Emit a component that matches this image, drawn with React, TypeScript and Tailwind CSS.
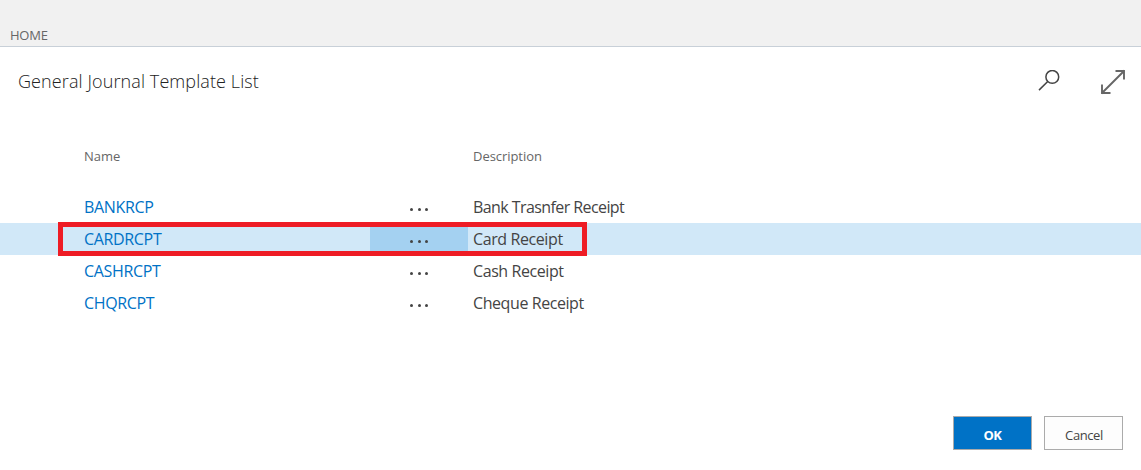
type Row = { name: string; desc: string; descClass: string; selected?: boolean };

const rows: Row[] = [
  { name: "BANKRCP", desc: "Bank Trasnfer Receipt", descClass: "tracking-[-0.58px]" },
  { name: "CARDRCPT", desc: "Card Receipt", descClass: "tracking-[-0.4px]", selected: true },
  { name: "CASHRCPT", desc: "Cash Receipt", descClass: "tracking-[-0.42px]" },
  { name: "CHQRCPT", desc: "Cheque Receipt", descClass: "tracking-[-0.42px]" },
];

function SearchIcon() {
  return (
    <svg width="24" height="24" viewBox="0 0 24 24" fill="none" stroke="#444" strokeWidth="1.5">
      <circle cx="14.3" cy="6.9" r="6.4" />
      <path d="M9.7 11.5 1 20.1" />
    </svg>
  );
}

function ExpandIcon() {
  return (
    <svg width="26" height="26" viewBox="0 0 26 26" fill="none" stroke="#666" strokeWidth="1.9">
      <path d="M1.5 24.5 24.5 1.5M15.5 2H24v8.5M2 15.5V24h8.5" />
    </svg>
  );
}

function Dots() {
  return (
    <span className="flex gap-[4.5px] pt-1">
      <i className="size-[3px] rounded-full bg-[#444]" />
      <i className="size-[3px] rounded-full bg-[#444]" />
      <i className="size-[3px] rounded-full bg-[#444]" />
    </span>
  );
}

export default function App() {
  return (
    <div className="flex h-[470px] w-[1141px] flex-col overflow-hidden bg-white font-['Open_Sans',sans-serif] text-[#444]">
      <header className="flex h-[47px] items-end border-b border-[#c8d0d8] bg-[#f1f1f1] pb-px pl-[10px] text-[13px] leading-5 tracking-[-0.25px] text-[#666]">
        <span>HOME</span>
      </header>
      <div className="flex h-[70px] items-center justify-between pl-[18px] pr-[15px]">
        <h1 className="pb-0.5 text-[18px] font-[350] tracking-[0.1px] text-[#222]">General Journal Template List</h1>
        <div className="flex items-center gap-[38px]">
          <SearchIcon />
          <ExpandIcon />
        </div>
      </div>
      <main className="flex-1 pt-[29px]">
        <div className="flex h-[22px] items-center pl-[84px] text-[13px] tracking-[-0.05px] text-[#666]">
          <span className="w-[389px]">Name</span>
          <span>Description</span>
        </div>
        <div className="relative mt-[23px] text-[16px]">
          {rows.map((r) => (
            <div key={r.name} className={`flex h-8 items-center pl-[84px] ${r.selected ? "bg-[#d1e8f8]" : ""}`}>
              <span className="w-[286px] tracking-[-0.34px] text-[#0072c6]">{r.name}</span>
              <span className={`flex h-full w-[98px] items-center justify-center ${r.selected ? "bg-[#a4d1f1]" : ""}`}>
                <Dots />
              </span>
              <span className={`pl-[5px] ${r.descClass}`}>{r.desc}</span>
            </div>
          ))}
          <div className="absolute left-[58px] top-[31px] h-[34px] w-[529px] border-[5px] border-[#ee1c25]" />
        </div>
      </main>
      <footer className="flex h-[54px] justify-end gap-3 pr-[18px] text-[13px]">
        <button className="h-[34px] w-[79px] border border-[#ababab] bg-[#0072c6] pt-[5px] font-bold tracking-[-0.4px] text-white">OK</button>
        <button className="h-[34px] w-[79px] border border-[#ababab] bg-[#fdfdfd] pt-[5px] pl-px tracking-[-0.4px]">Cancel</button>
      </footer>
    </div>
  );
}
